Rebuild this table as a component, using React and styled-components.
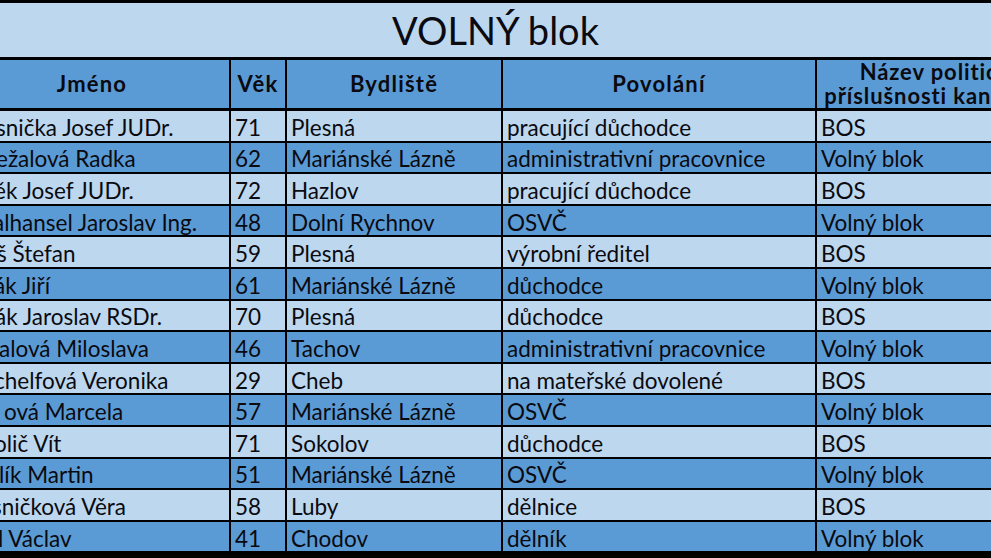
import { styled, createGlobalStyle } from "styled-components";

const GlobalStyle = createGlobalStyle`
  html, body {
    margin: 0;
    padding: 0;
    background: #000;
  }
  #root {
    width: 991px;
    height: 558px;
    overflow: hidden;
  }
`;

const LIGHT = "#bdd7ee";
const DARK = "#5b9bd5";
// the sheet is a crop: the name column starts left of the window
const COLS = "274px 54px 214px 312px 248px";
const CROP_LEFT = 45;

const Sheet = styled.div`
  width: 991px;
  height: 558px;
  overflow: hidden;
  background: #000;
  padding-top: 3px;
  box-sizing: border-box;
  font-family: Lato, "Liberation Sans", sans-serif;
  color: #0a0a10;
`;

const Title = styled.div`
  height: 54px;
  background: ${LIGHT};
  display: flex;
  align-items: center;
  justify-content: center;
  font-size: 38px;
  border-bottom: 3px solid #000;
`;

const Row = styled.div`
  display: grid;
  grid-template-columns: ${COLS};
  column-gap: 2px;
  width: max-content;
  margin-left: -${CROP_LEFT}px;
  height: ${(p) => p.$height};
  border-bottom: ${(p) => p.$line} solid #000;
`;

const HeadCell = styled.div`
  background: ${DARK};
  display: flex;
  align-items: center;
  justify-content: center;
  text-align: center;
  font-weight: 700;
  font-size: 22px;
  letter-spacing: ${(p) => p.$spacing ?? 1.2}px;
  line-height: 24px;
  white-space: nowrap;
  overflow: hidden;
`;

const Cell = styled.div`
  background: ${(p) => (p.$dark ? DARK : LIGHT)};
  display: flex;
  align-items: center;
  padding: 3px 0 0 4px;
  font-size: 22.5px;
  white-space: nowrap;
  overflow: hidden;
  text-indent: ${(p) => p.$shift || 0}px;
`;

const people = [
  ["snička Josef JUDr.", -8, "71", "Plesná", "pracující důchodce", "BOS"],
  ["ežalová Radka", -8, "62", "Mariánské Lázně", "administrativní pracovnice", "Volný blok"],
  ["ěk Josef JUDr.", -10, "72", "Hazlov", "pracující důchodce", "BOS"],
  ["alhansel Jaroslav Ing.", -11, "48", "Dolní Rychnov", "OSVČ", "Volný blok"],
  ["š Štefan", -7, "59", "Plesná", "výrobní ředitel", "BOS"],
  ["ák Jiří", -10, "61", "Mariánské Lázně", "důchodce", "Volný blok"],
  ["ák Jaroslav RSDr.", -9, "70", "Plesná", "důchodce", "BOS"],
  ["alová Miloslava", -5, "46", "Tachov", "administrativní pracovnice", "Volný blok"],
  ["chelfová Veronika", -10, "29", "Cheb", "na mateřské dovolené", "BOS"],
  ["ová Marcela", 0, "57", "Mariánské Lázně", "OSVČ", "Volný blok"],
  ["olič Vít", -10, "71", "Sokolov", "důchodce", "BOS"],
  ["lík Martin", -5, "51", "Mariánské Lázně", "OSVČ", "Volný blok"],
  ["sničková Věra", -12, "58", "Luby", "dělnice", "BOS"],
  ["l Václav", -6, "41", "Chodov", "dělník", "Volný blok"],
];

export default function App() {
  return (
    <>
      <GlobalStyle />
      <Sheet>
        <Title>VOLNÝ blok</Title>
        <Row $height="48px" $line="3px">
          <HeadCell>Jméno</HeadCell>
          <HeadCell>Věk</HeadCell>
          <HeadCell>Bydliště</HeadCell>
          <HeadCell>Povolání</HeadCell>
          <HeadCell $spacing={0.9}>
            Název politické
            <br />
            příslušnosti kandidáta
          </HeadCell>
        </Row>
        {people.map(([name, shift, age, town, job, party], i) => (
          <Row key={i} $height="29.6px" $line="2px">
            <Cell $dark={i % 2 === 1} $shift={CROP_LEFT + shift}>
              {name}
            </Cell>
            <Cell $dark={i % 2 === 1}>{age}</Cell>
            <Cell $dark={i % 2 === 1}>{town}</Cell>
            <Cell $dark={i % 2 === 1}>{job}</Cell>
            <Cell $dark={i % 2 === 1}>{party}</Cell>
          </Row>
        ))}
      </Sheet>
    </>
  );
}
